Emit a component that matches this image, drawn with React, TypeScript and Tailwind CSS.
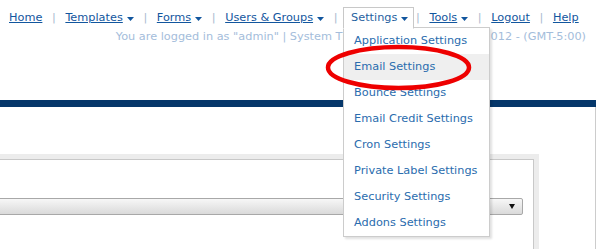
import React from 'react';

const font = { fontFamily: '"DejaVu Sans", Verdana, sans-serif' };

const Caret: React.FC = () => (
  <svg width="7" height="4" viewBox="0 0 7 4" className="ml-[4px] mt-[1px]">
    <polygon points="0,0 7,0 3.5,4" fill="#12569e" />
  </svg>
);

const Pipe: React.FC = () => (
  <span className="w-[7px] text-center text-[#a9b9cf]">|</span>
);

const menuItems = [
  'Application Settings',
  'Email Settings',
  'Bounce Settings',
  'Email Credit Settings',
  'Cron Settings',
  'Private Label Settings',
  'Security Settings',
  'Addons Settings',
];

const NavLink: React.FC<{ label: string; caret?: boolean }> = ({ label, caret }) => (
  <div className="flex items-center h-[22px] px-[7px] border border-transparent">
    <a href="#" className="underline text-[#12569e]">{label}</a>
    {caret && <Caret />}
  </div>
);

const SettingsMenu: React.FC = () => (
  <div className="relative ml-[4px]">
    <div className="relative z-20 flex items-center h-[22px] pl-[7px] pr-[5px] border border-[#c8c8c8] border-b-white bg-white">
      <span className="text-[#1f5f9f]">Settings</span>
      <Caret />
    </div>
    <div className="absolute z-10 left-0 top-[20px] w-[147px] bg-white border border-[#cccccc] shadow-[2px_2px_2px_rgba(0,0,0,0.12)]">
      {menuItems.map((item, i) => (
        <div
          key={item}
          className={'h-[26px] flex items-center pl-[10px] text-[#2a6cae] ' + (i === 1 ? 'bg-[#efefef]' : '')}
        >
          {item}
        </div>
      ))}
    </div>
  </div>
);

export default function App() {
  return (
    <div className="relative w-[599px] h-[249px] overflow-hidden bg-white text-[11.3px]" style={font}>
      <div className="w-[596px]">
        {/* header */}
        <div className="h-[93px]">
          <div className="flex items-center mt-[7px] pl-[1px] leading-[22px]">
            <NavLink label="Home" />
            <Pipe />
            <NavLink label="Templates" caret />
            <Pipe />
            <NavLink label="Forms" caret />
            <Pipe />
            <NavLink label="Users & Groups" caret />
            <Pipe />
            <SettingsMenu />
            <Pipe />
            <NavLink label="Tools" caret />
            <Pipe />
            <NavLink label="Logout" />
            <Pipe />
            <NavLink label="Help" />
          </div>
          <div className="mt-[1px] pr-[10px] text-right leading-[14px] text-[#a4bddb]">
            You are logged in as "admin" | System Time: Tuesday, March 13, 2012 - (GMT-5:00)
          </div>
        </div>

        <div className="h-[7px] bg-[#05376a]" />

        {/* content */}
        <div className="h-[160px] border-r border-[#cccccc] pt-[47px]">
          <div className="ml-[-20px] w-[559px] h-[120px] border-[5px] border-[#ececec]">
            <div className="h-full border border-[#c8c8c8] pt-[38px] pr-[10px]">
              <div className="flex items-center justify-end h-[17px] pr-[7px] border border-[#a8a8a8] rounded-[2px] bg-gradient-to-b from-[#f7f7f7] to-[#dadada]">
                <svg width="6" height="5" viewBox="0 0 6 5">
                  <polygon points="0,0 6,0 3,5" fill="#111" />
                </svg>
              </div>
            </div>
          </div>
        </div>
      </div>

      {/* annotation ellipse */}
      <svg className="absolute z-30 left-0 top-0 pointer-events-none" width="599" height="249">
        <ellipse cx="398.5" cy="67.5" rx="70.5" ry="20.5" fill="none" stroke="#ee0000" strokeWidth="4.5" />
      </svg>
    </div>
  );
}
